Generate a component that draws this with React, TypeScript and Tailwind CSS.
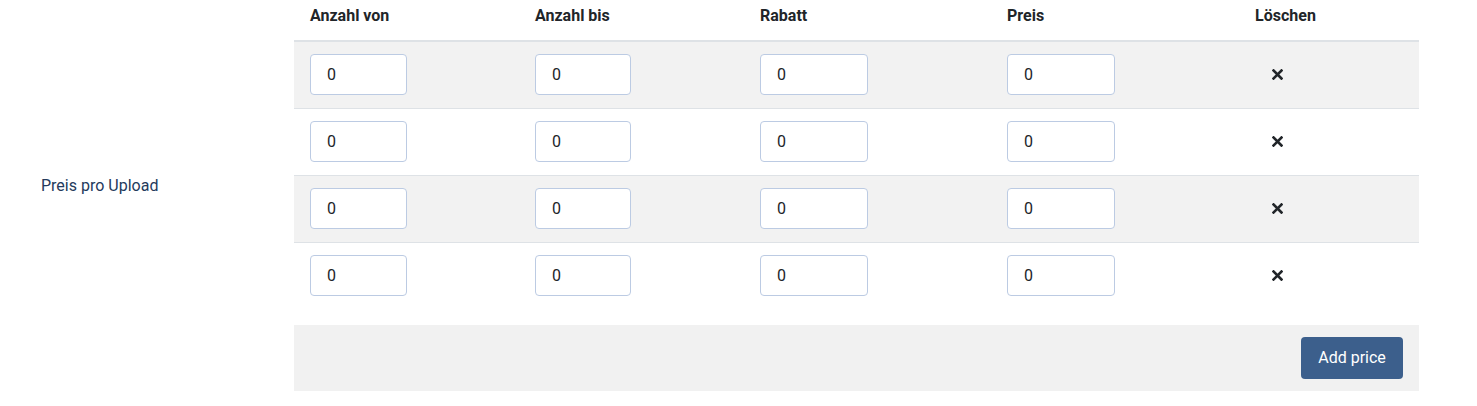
import React from "react";

const rows = [0, 1, 2, 3];

function ValueInput({ width }: { width: string }) {
  return (
    <input
      type="text"
      defaultValue="0"
      className={`${width} h-[41px] rounded-[4px] border border-[#bccbe3] bg-white px-4 text-[16px] text-[#212529] outline-none`}
    />
  );
}

function DeleteIcon() {
  return (
    <svg width="11" height="11" viewBox="0 0 11 11" className="block">
      <path d="M1.5 1.5 L9.5 9.5 M9.5 1.5 L1.5 9.5" stroke="#212529" strokeWidth="2.6" strokeLinecap="square" />
    </svg>
  );
}

export default function App() {
  return (
    <div className="flex w-[1477px] bg-white font-['Roboto',sans-serif] text-[16px]">
      <div className="flex w-[294px] items-center pl-[41px] pb-[34px]">
        <span className="text-[16px] text-[#243a5c]">Preis pro Upload</span>
      </div>

      <div className="w-[1125px]">
        <div className="flex h-[42px] border-b-2 border-[#dee2e6] font-bold text-[#212529]">
          <div className="w-[225px] pl-4 pt-[4px]">Anzahl von</div>
          <div className="w-[225px] pl-4 pt-[4px]">Anzahl bis</div>
          <div className="w-[247px] pl-4 pt-[4px]">Rabatt</div>
          <div className="w-[161px] pl-4 pt-[4px]">Preis</div>
          <div className="w-[267px] pt-[4px] text-center">Löschen</div>
        </div>

        {rows.map((r) => (
          <div
            key={r}
            className={`flex ${r > 0 ? "h-[67px] border-t border-[#dee2e6]" : "h-[66px]"} ${
              r % 2 === 0 ? "bg-[#f2f2f2]" : "bg-white"
            }`}
          >
            <div className="w-[225px] pl-4 pt-3">
              <ValueInput width="w-[97px]" />
            </div>
            <div className="w-[225px] pl-4 pt-3">
              <ValueInput width="w-[96px]" />
            </div>
            <div className="w-[247px] pl-4 pt-3">
              <ValueInput width="w-[108px]" />
            </div>
            <div className="w-[161px] pl-4 pt-3">
              <ValueInput width="w-[108px]" />
            </div>
            <div className="flex w-[267px] items-center justify-center pr-[17px] pb-[1px]">
              <DeleteIcon />
            </div>
          </div>
        ))}

        <div className="mt-[16px] flex h-[66px] items-center justify-end bg-[#f1f1f1] pr-4">
          <button className="h-[42px] w-[102px] rounded-[4px] bg-[#3c5f8c] text-[16px] text-white">
            Add price
          </button>
        </div>
        <div className="h-[15px]" />
      </div>
    </div>
  );
}
